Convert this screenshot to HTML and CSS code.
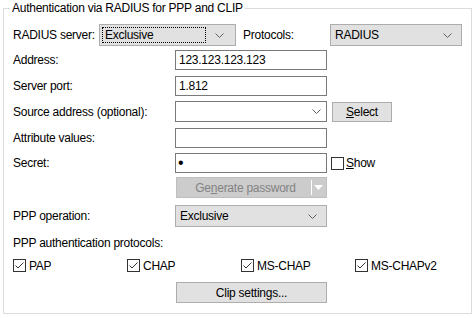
FILE: index.html
```html
<!DOCTYPE html>
<html lang="en">
<head>
    <meta charset="UTF-8">
    <title>Authentication via RADIUS for PPP and CLIP</title>
    <link rel="stylesheet" href="styles.css">
</head>
<body>

    <fieldset class="group">
        <legend>Authentication via RADIUS for PPP and CLIP</legend>

        <div class="row row-first">
            <span class="lbl lbl-server">RADIUS server:</span>
            <div class="combo combo-server">
                <span class="focus-box">Exclusive</span>
                <svg class="arrow" width="9" height="5" viewBox="0 0 9 5"><polyline points="0.5,0.5 4.5,4.5 8.5,0.5" fill="none" stroke="#606060" stroke-width="1"/></svg>
            </div>
            <span class="lbl lbl-proto">Protocols:</span>
            <div class="combo combo-proto">
                <span>RADIUS</span>
                <svg class="arrow" width="9" height="5" viewBox="0 0 9 5"><polyline points="0.5,0.5 4.5,4.5 8.5,0.5" fill="none" stroke="#606060" stroke-width="1"/></svg>
            </div>
        </div>

        <div class="row row-address">
            <label class="lbl">Address:</label>
            <input class="field" type="text" value="123.123.123.123">
        </div>

        <div class="row row-port">
            <label class="lbl">Server port:</label>
            <input class="field" type="text" value="1.812">
        </div>

        <div class="row row-source">
            <label class="lbl">Source address (optional):</label>
            <div class="combo combo-edit">
                <span></span>
                <svg class="arrow" width="9" height="5" viewBox="0 0 9 5"><polyline points="0.5,0.5 4.5,4.5 8.5,0.5" fill="none" stroke="#606060" stroke-width="1"/></svg>
            </div>
            <button class="btn btn-select" type="button"><u>S</u>elect</button>
        </div>

        <div class="row row-attr">
            <label class="lbl">Attribute values:</label>
            <input class="field" type="text" value="">
        </div>

        <div class="row row-secret">
            <label class="lbl">Secret:</label>
            <input class="field field-secret" type="password" value="x">
            <span class="check check-show"><span class="box"></span><span><u>S</u>how</span></span>
        </div>

        <div class="row row-generate">
            <span class="lbl"></span>
            <div class="split">
                <span class="split-main">Ge<u>n</u>erate password</span>
                <span class="split-sep"></span>
                <svg class="split-arrow" width="9" height="5" viewBox="0 0 9 5"><polygon points="0,0 9,0 4.5,5" fill="#ffffff"/></svg>
            </div>
        </div>

        <div class="row row-ppp">
            <span class="lbl">PPP operation:</span>
            <div class="combo combo-ppp">
                <span>Exclusive</span>
                <svg class="arrow" width="9" height="5" viewBox="0 0 9 5"><polyline points="0.5,0.5 4.5,4.5 8.5,0.5" fill="none" stroke="#606060" stroke-width="1"/></svg>
            </div>
        </div>

        <div class="row row-auth">
            <span>PPP authentication protocols:</span>
        </div>

        <div class="row row-checks">
            <span class="check"><span class="box"><svg width="11" height="11" viewBox="0 0 11 11"><polyline points="1.5,5.5 4,8 9.5,2.5" fill="none" stroke="#333" stroke-width="1"/></svg></span><span>PAP</span></span>
            <span class="check"><span class="box"><svg width="11" height="11" viewBox="0 0 11 11"><polyline points="1.5,5.5 4,8 9.5,2.5" fill="none" stroke="#333" stroke-width="1"/></svg></span><span>CHAP</span></span>
            <span class="check"><span class="box"><svg width="11" height="11" viewBox="0 0 11 11"><polyline points="1.5,5.5 4,8 9.5,2.5" fill="none" stroke="#333" stroke-width="1"/></svg></span><span>MS-CHAP</span></span>
            <span class="check"><span class="box"><svg width="11" height="11" viewBox="0 0 11 11"><polyline points="1.5,5.5 4,8 9.5,2.5" fill="none" stroke="#333" stroke-width="1"/></svg></span><span>MS-CHAPv2</span></span>
        </div>

        <div class="row row-clip">
            <span class="lbl lbl-clip"></span>
            <button class="btn btn-clip" type="button">Clip settings...</button>
        </div>
    </fieldset>

</body>
</html>
```

FILE: styles.css
```css
/* General Reset */
* {
    box-sizing: border-box;
}

body {
    margin: 0;
    background: #fff;
    color: #000;
    font: 12px "Liberation Sans", Arial, sans-serif;
    letter-spacing: -0.25px;
}

/* Group box */
.group {
    margin: 0 4px 0 3px;
    padding: 8px 0 10px 9px;
    border: 1px solid #dcdcdc;
    min-width: 0;
}

legend {
    margin-left: -3px;
    padding: 0 2px;
    line-height: 16px;
}

/* Rows */
.row {
    display: flex;
    align-items: center;
    height: 20px;
    margin-top: 5px;
}

.row-first { height: 22px; margin-top: 0; }
.row-address { margin-top: 4px; }
.row-port { margin-top: 6px; }
.row-source { height: 21px; margin-top: 5px; }
.row-attr { margin-top: 6px; }
.row-secret { margin-top: 5px; }
.row-generate { height: 21px; margin-top: 4px; }
.row-ppp { height: 22px; margin-top: 7px; }
.row-auth { height: 15px; margin-top: 8px; }
.row-checks { height: 15px; margin-top: 8px; }
.row-clip { height: 21px; margin-top: 9px; }

.lbl {
    width: 162px;
    flex: none;
}

.lbl-server { width: 86px; }
.lbl-proto { width: 87px; margin-left: 7px; }
.lbl-clip { width: 163px; }

/* Text boxes */
.field {
    width: 152px;
    height: 20px;
    margin: 0;
    padding: 0 3px;
    border: 1px solid #7a7a7a;
    background: #fff;
    font: inherit;
    letter-spacing: inherit;
    color: #000;
    outline: none;
}

.field-secret {
    padding-left: 2px;
    font-size: 16px;
}

/* Combo boxes */
.combo {
    display: flex;
    align-items: center;
    height: 100%;
    padding-left: 4px;
    border: 1px solid #adadad;
    background: #e1e1e1;
}

.combo .arrow {
    flex: none;
    margin-left: auto;
    margin-right: 9px;
}

.combo-server {
    width: 137px;
    padding: 2px;
}

.combo-server .arrow {
    margin-left: 9px;
    margin-right: 9px;
}

.focus-box {
    flex: 1;
    align-self: stretch;
    display: flex;
    align-items: center;
    padding-left: 2px;
    border: 1px dotted #000;
}

.combo-proto { width: 132px; }
.combo-ppp { width: 152px; }

.combo-edit {
    width: 152px;
    border-color: #7a7a7a;
    background: #fff;
}

.combo-edit .arrow { margin-right: 5px; }

/* Buttons */
.btn {
    height: 100%;
    margin: 0;
    padding: 0;
    border: 1px solid #adadad;
    background: #e1e1e1;
    font: inherit;
    letter-spacing: inherit;
    color: #000;
}

.btn-select {
    width: 60px;
    height: 20px;
    margin-left: 5px;
}

.btn-clip {
    width: 151px;
}

.split {
    display: flex;
    align-items: center;
    width: 151px;
    height: 100%;
    margin-left: 1px;
    border: 1px solid #bfbfbf;
    background: #cccccc;
    color: #838383;
}

.split-main {
    flex: 1;
    text-align: center;
    padding-left: 3px;
}

.split-sep {
    width: 1px;
    height: 15px;
    background: #fff;
}

.split-arrow {
    margin: 0 3px 0 2px;
}

/* Check boxes */
.check {
    display: flex;
    align-items: center;
    width: 114px;
    flex: none;
}

.check .box {
    display: flex;
    align-items: center;
    justify-content: center;
    width: 13px;
    height: 13px;
    margin-right: 3px;
    border: 1px solid #333;
    background: #fff;
}

.check-show {
    width: auto;
    margin-left: 4px;
}

.check-show .box {
    margin-right: 2px;
}
```
